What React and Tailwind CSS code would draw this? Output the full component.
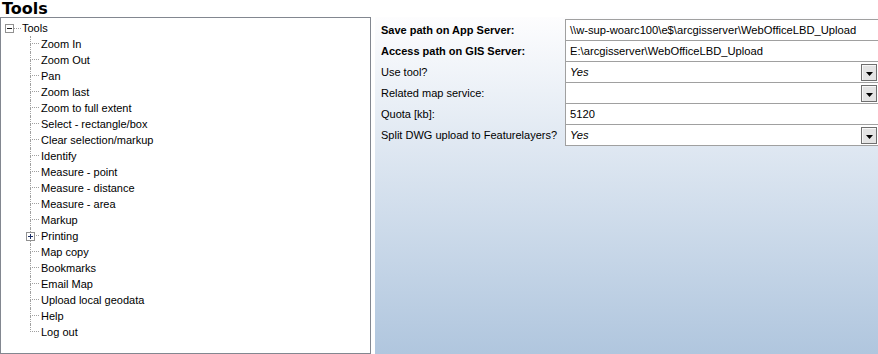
const items = [
  "Zoom In",
  "Zoom Out",
  "Pan",
  "Zoom last",
  "Zoom to full extent",
  "Select - rectangle/box",
  "Clear selection/markup",
  "Identify",
  "Measure - point",
  "Measure - distance",
  "Measure - area",
  "Markup",
  "Printing",
  "Map copy",
  "Bookmarks",
  "Email Map",
  "Upload local geodata",
  "Help",
  "Log out",
];

const rows = [
  { label: "Save path on App Server:", bold: true, value: "\\\\w-sup-woarc100\\e$\\arcgisserver\\WebOfficeLBD_Upload" },
  { label: "Access path on GIS Server:", bold: true, value: "E:\\arcgisserver\\WebOfficeLBD_Upload" },
  { label: "Use tool?", value: "Yes", italic: true, drop: true },
  { label: "Related map service:", value: "", drop: true },
  { label: "Quota [kb]:", value: "5120" },
  { label: "Split DWG upload to Featurelayers?", value: "Yes", italic: true, drop: true },
];

function DropButton() {
  return (
    <div className="ml-auto mr-px w-[16px] h-[17px] shrink-0 border border-[#6f6f6f] bg-[#e4e4e4] flex items-center justify-center pt-[3px] shadow-[inset_1px_1px_0_#f8f8f8]">
      <svg width="7" height="4" viewBox="0 0 7 4">
        <path d="M0 0H7L3.5 4Z" fill="#000" />
      </svg>
    </div>
  );
}

export default function App() {
  return (
    <div className="w-[878px] h-[354px] bg-white flex flex-col overflow-hidden font-['Liberation_Sans',Arial,sans-serif] text-[11px] text-black">
      <div className="h-[17px] pl-[2px] font-['DejaVu_Sans',sans-serif] font-bold text-[16px] leading-[17px]">
        Tools
      </div>
      <div className="flex flex-1 min-h-0 gap-[4px]">
        <div className="w-[371px] shrink-0 border border-[#828790] bg-white pt-[2px]">
          <div className="flex h-4 items-center">
            <div className="ml-[4px] w-[9px] h-[9px] border border-[#919191] bg-white flex items-center justify-center">
              <div className="w-[5px] h-px bg-[#1a1a1a]" />
            </div>
            <div className="w-[7px] border-t border-dotted border-[#a0a0a0]" />
            <span className="ml-[1px] leading-4">Tools</span>
          </div>
          {items.map((label, i) => {
            const last = i === items.length - 1;
            const expandable = label === "Printing";
            return (
              <div key={label} className="flex h-4">
                <div className="w-[29px] shrink-0" />
                <div className="w-[11px] shrink-0 flex flex-col relative">
                  <div className="h-[8px] w-[9px] border-l border-b border-dotted border-[#a0a0a0]" />
                  <div className={last ? "h-[8px]" : "h-[8px] border-l border-dotted border-[#a0a0a0]"} />
                  {expandable && (
                    <div className="absolute left-[-4px] top-[4px] w-[9px] h-[9px] border border-[#919191] bg-white flex items-center justify-center">
                      <div className="relative w-[5px] h-[5px]">
                        <div className="absolute left-0 top-[2px] w-[5px] h-px bg-[#1c2f66]" />
                        <div className="absolute left-[2px] top-0 w-px h-[5px] bg-[#1c2f66]" />
                      </div>
                    </div>
                  )}
                </div>
                <span className="leading-4 whitespace-nowrap">{label}</span>
              </div>
            );
          })}
        </div>
        <div className="flex-1 bg-gradient-to-b from-[#fdfdfe] to-[#b0c6de] pt-[2px]">
          <div className="grid grid-cols-[190px_1fr]">
            {rows.map((r, i) => (
              <div key={r.label} className="contents">
                <div
                  className={`flex items-center pl-[6px] whitespace-nowrap ${i === 0 ? "pt-px" : ""} pb-px ${r.bold ? "font-bold" : ""}`}
                >
                  {r.label}
                </div>
                <div
                  className={`bg-white border-l border-b border-[#a0a0a0] flex items-center pl-[4px] whitespace-nowrap text-[11.2px] ${i === 0 ? "border-t h-[22px]" : "h-[21px]"}`}
                >
                  <span className={r.italic ? "italic" : ""}>{r.value}</span>
                  {r.drop && <DropButton />}
                </div>
              </div>
            ))}
          </div>
        </div>
      </div>
    </div>
  );
}
